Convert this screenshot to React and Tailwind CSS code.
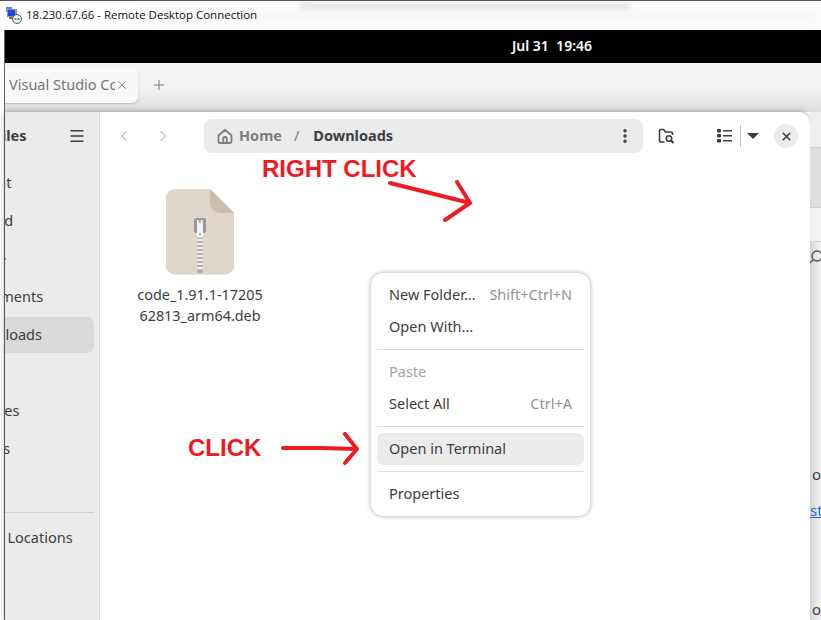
import React from "react";
import { Plus, X, ChevronLeft, ChevronRight, Menu, EllipsisVertical } from "lucide-react";

const sidebarItems = [
  { label: "Recent", row: "h-[38px]", text: "ml-[-40px]" },
  { label: "Starred", row: "h-[38px]", text: "ml-[-42px]" },
  { label: "Home", row: "h-[38px]", text: "ml-[-40px]" },
  { label: "Documents", row: "h-[38px]", text: "ml-[-40px]" },
  { label: "Downloads", row: "h-[36px] my-px", text: "ml-[-39px]", active: true },
  { label: "Music", row: "h-[38px]", text: "ml-[-40px]" },
  { label: "Pictures", row: "h-[38px]", text: "ml-[-40px]" },
  { label: "Videos", row: "h-[38px]", text: "ml-[-40px]" },
];

const RdpIcon = () => (
  <svg width="17" height="17" viewBox="0 0 17 17">
    <rect x="1" y="0" width="6" height="5" fill="#6f7fa8" />
    <rect x="2" y="2" width="10" height="8" fill="#8d98b5" />
    <rect x="3" y="3" width="7" height="6" fill="#1f45e0" />
    <rect x="4" y="10" width="5" height="2" fill="#666" />
    <circle cx="12" cy="12" r="4.5" fill="#e8efe4" stroke="#555" strokeWidth="1" />
    <path d="M9.5 12h2M12.5 12h2" stroke="#1d9a3a" strokeWidth="1.5" />
  </svg>
);

const HomeIcon = () => (
  <svg width="16" height="16" viewBox="0 0 16 16" fill="none" stroke="#7c7c7c" strokeWidth="1.8">
    <path d="M1.5 7.5 8 1.8l6.5 5.7v6a1.5 1.5 0 0 1-1.5 1.5H3a1.5 1.5 0 0 1-1.5-1.5z" strokeLinejoin="round" />
    <path d="M6.2 15v-4.2a1.8 1.8 0 0 1 3.6 0V15" />
  </svg>
);

const FolderSearchIcon = () => (
  <svg width="17" height="16" viewBox="0 0 17 16" fill="none" stroke="#3d3d3d" strokeWidth="1.6">
    <path d="M6.5 14H3a1.5 1.5 0 0 1-1.5-1.5V3A1.5 1.5 0 0 1 3 1.5h2.5L7.5 4H13a1.5 1.5 0 0 1 1.5 1.5V7" strokeLinejoin="round" />
    <circle cx="11" cy="10.5" r="2.7" />
    <path d="m13 12.5 2.5 2.5" strokeWidth="2" />
  </svg>
);

const ListIcon = () => (
  <svg width="15" height="14" viewBox="0 0 15 14" fill="#3d3d3d">
    <rect x="0" y="0" width="4" height="3.5" rx="1" />
    <rect x="0" y="5" width="4" height="3.5" rx="1" />
    <rect x="0" y="10" width="4" height="3.5" rx="1" />
    <rect x="6" y="1" width="9" height="1.5" />
    <rect x="6" y="6" width="9" height="1.5" />
    <rect x="6" y="11" width="9" height="1.5" />
  </svg>
);

const ZipFileIcon = () => (
  <svg width="68" height="87" viewBox="0 0 68 87">
    <path d="M9 0.5h35l24 24v52a9 9 0 0 1-9 9H9a9 9 0 0 1-9-9V9.5a9 9 0 0 1 9-9z" fill="#d0c8bf" />
    <path d="M9 0h35l24 24v52a9 9 0 0 1-9 9H9a9 9 0 0 1-9-9V9a9 9 0 0 1 9-9z" fill="#ded5cb" />
    <path d="M44 0l24 24H54a10 10 0 0 1-10-10z" fill="#cbbcab" />
    <rect x="28" y="29" width="12" height="15" rx="2" fill="#989898" />
    <path d="M31 31h1.5l1.5 4 1-4h1.500l.5 6v11h-6z" fill="#f4f4f4" />
    <circle cx="34" cy="45" r="1.2" fill="#a9a9a9" />
    <rect x="31" y="49" width="6" height="35" fill="#b4afa9" />
    <path d="M31 51h6M31 55h6M31 59h6M31 63h6M31 67h6M31 71h6M31 75h6M31 79h6" stroke="#f1f1f1" strokeWidth="2" />
  </svg>
);

const RightClickArrow = () => (
  <svg width="90" height="52" viewBox="0 0 90 52" fill="none" stroke="#ed1c24" strokeWidth="4" strokeLinecap="round" strokeLinejoin="round">
    <path d="M3 3 83 23M70 2l13 21-25 17" />
  </svg>
);

const ClickArrow = () => (
  <svg width="82" height="34" viewBox="0 0 82 34" fill="none" stroke="#ed1c24" strokeWidth="4" strokeLinecap="round" strokeLinejoin="round">
    <path d="M3 16h38l36 1M65 2l12 15-12 14" />
  </svg>
);

const MenuRow = ({ label, hint, disabled, active }) => (
  <div className={`flex h-8 items-center justify-between rounded-md px-3 pb-px ${active ? "bg-[#ebebeb]" : ""} ${disabled ? "text-[#a3a3a3]" : "text-[#3d3d3d]"}`}>
    <span>{label}</span>
    {hint && <span className="text-[#929292]">{hint}</span>}
  </div>
);

const App = () => {
  return (
    <div className="relative flex h-[620px] w-[821px] flex-col overflow-hidden bg-white font-['Noto_Sans',sans-serif] text-[14px] text-[#3d3d3d]">
      {/* rdp title bar */}
      <div className="relative flex h-[30px] shrink-0 items-center overflow-hidden border-t border-[#555] bg-white pl-[5px]">
        <div className="absolute left-[300px] top-[3px] h-[5px] w-[330px] bg-[#d2d2d2] blur-[3px]"></div>
        <div className="absolute left-[140px] top-[10px] h-[12px] w-[680px] bg-[#f4f4f4] blur-[6px]"></div>
        <div className="relative flex items-center gap-1 pb-[1px]">
          <RdpIcon />
          <span className="font-['Open_Sans',sans-serif] text-[11.5px] text-[#111]">18.230.67.66 - Remote Desktop Connection</span>
        </div>
      </div>

      <div className="ml-[4px] flex min-h-0 flex-1 flex-col border-l border-[#666]">
        {/* gnome top bar */}
        <div className="flex h-[33px] shrink-0 items-center justify-center bg-black pb-[2px] pl-[278px] text-[14px] font-semibold text-white">
          <span className="whitespace-pre">Jul 31  19:46</span>
        </div>

        {/* browser tab strip behind the window */}
        <div className="flex h-[49px] shrink-0 items-start bg-gradient-to-b from-[#f2f2f2] from-50% to-[#dedede] pt-[4px]">
          <div className="flex h-[36px] w-[133px] items-center justify-between overflow-hidden rounded-r-md bg-[#f8f8f8] pl-[4px] pr-[9px] shadow-[0_1px_2px_rgba(0,0,0,0.2)]">
            <span className="w-[106px] overflow-hidden whitespace-nowrap text-[14.5px] text-[#757575]">Visual Studio Code</span>
            <X size={14} strokeWidth={1.3} className="text-[#666]" />
          </div>
          <Plus size={16} strokeWidth={1.3} className="ml-[13px] mt-[10px] text-[#666]" />
        </div>

        <div className="flex min-h-0 flex-1">
          {/* files window */}
          <div className="flex w-[805px] shrink-0 overflow-hidden rounded-tr-[12px] bg-white shadow-[0_0_6px_rgba(0,0,0,0.35)]">
            {/* sidebar */}
            <div className="flex w-[95px] shrink-0 flex-col overflow-hidden border-r border-[#d9d9d9] bg-[#ebebeb]">
              <div className="relative flex h-[48px] shrink-0 items-center">
                <span className="ml-[-11px] text-[14.5px] font-bold">Files</span>
                <Menu size={18} strokeWidth={2} className="absolute left-[63px] top-[15px] text-[#3d3d3d]" />
              </div>
              <div className="mt-[4px] flex flex-col">
                {sidebarItems.map((item) => (
                  <div
                    key={item.label}
                    className={`flex items-center rounded-r-lg ${item.row} ${item.active ? "mr-[5px] bg-[#d9d9d9]" : ""}`}
                  >
                    <span className={`whitespace-nowrap text-[14.5px] ${item.text}`}>{item.label}</span>
                  </div>
                ))}
              </div>
              <div className="mr-[5px] mt-[44px] border-t border-[#d0d0d0]"></div>
              <div className="ml-[-41px] mt-[14px] whitespace-nowrap text-[14.5px]">Other Locations</div>
            </div>

            {/* main pane */}
            <div className="flex min-w-0 flex-1 flex-col">
              <div className="flex h-[48px] shrink-0 items-center pl-[15px] pr-[10px]">
                <ChevronLeft size={18} strokeWidth={2} className="text-[#c9c9c9]" />
                <ChevronRight size={18} strokeWidth={2} className="ml-[21px] text-[#c9c9c9]" />
                <div className="ml-[32px] flex h-[34px] w-[439px] items-center rounded-lg bg-[#ebebeb] pl-[13px] pr-[9px] text-[14.5px] font-bold">
                  <HomeIcon />
                  <span className="ml-[6px] text-[#7c7c7c]">Home</span>
                  <span className="ml-[12px] font-normal text-[#7c7c7c]">/</span>
                  <span className="ml-[14px]">Downloads</span>
                  <EllipsisVertical size={18} strokeWidth={2.5} className="ml-auto text-[#3d3d3d]" />
                </div>
                <div className="ml-[15px]">
                  <FolderSearchIcon />
                </div>
                <div className="ml-[42px]">
                  <ListIcon />
                </div>
                <div className="ml-[8px] h-[22px] w-px bg-[#c4c4c4]"></div>
                <div className="ml-[6px] h-0 w-0 border-x-[6px] border-t-[6px] border-x-transparent border-t-[#3d3d3d]"></div>
                <div className="ml-[15px] flex h-6 w-6 items-center justify-center rounded-full bg-[#ebebeb]">
                  <X size={13} strokeWidth={3} className="text-[#3d3d3d]" />
                </div>
              </div>

              <div className="ml-[37px] flex w-[126px] flex-col items-center pt-[29px]">
                <ZipFileIcon />
                <div className="mt-[8px] w-[130px] text-center text-[14.4px] leading-[21px]">
                  <div>code_1.91.1-17205</div>
                  <div>62813_arm64.deb</div>
                </div>
              </div>
            </div>
          </div>

          {/* sliver of the page behind the window */}
          <div className="relative min-w-0 flex-1 overflow-hidden bg-gradient-to-r from-[#d4d4d4] to-[#f4f4f4]">
            <div className="h-[35px] bg-[#eeeeee]"></div>
            <div className="h-[60px] border-t border-[#cfcfcf] bg-[#dddddd]"></div>
            <div className="h-[35px] border-y border-[#cfcfcf] bg-[#f2f2f2]"></div>
            <svg width="11" height="20" viewBox="0 0 11 20" fill="none" stroke="#555" strokeWidth="1.4" className="absolute left-0 top-[136px]">
              <circle cx="7" cy="8" r="5" />
              <path d="M3 12 0 15" />
            </svg>
            <div className="absolute left-[2px] top-[352px] text-[15px] leading-5">o</div>
            <div className="absolute left-0 top-[388px] text-[15px] leading-5 text-[#1a6fc4] underline">sta</div>
            <div className="absolute left-[2px] top-[487px] text-[15px] leading-5">ow</div>
          </div>
        </div>
      </div>

      {/* context menu */}
      <div className="absolute left-[371px] top-[273px] w-[219px] rounded-xl bg-white p-[6px] text-[14.5px] shadow-[0_0_5px_rgba(0,0,0,0.35)]">
        <MenuRow label="New Folder..." hint="Shift+Ctrl+N" />
        <MenuRow label="Open With..." />
        <div className="my-[6px] border-t border-[#dedede]"></div>
        <MenuRow label="Paste" disabled />
        <MenuRow label="Select All" hint="Ctrl+A" />
        <div className="my-[6px] border-t border-[#dedede]"></div>
        <MenuRow label="Open in Terminal" active />
        <div className="my-[6px] border-t border-[#dedede]"></div>
        <MenuRow label="Properties" />
      </div>

      {/* red annotations */}
      <div className="absolute left-[262px] top-[154px] font-['Liberation_Sans',sans-serif] text-[24px] font-bold leading-[30px] text-[#ed1c24]">RIGHT CLICK</div>
      <div className="absolute left-[387px] top-[180px]"><RightClickArrow /></div>
      <div className="absolute left-[188px] top-[433px] font-['Liberation_Sans',sans-serif] text-[24px] font-bold leading-[30px] text-[#ed1c24]">CLICK</div>
      <div className="absolute left-[280px] top-[432px]"><ClickArrow /></div>
    </div>
  );
};

export default App;
